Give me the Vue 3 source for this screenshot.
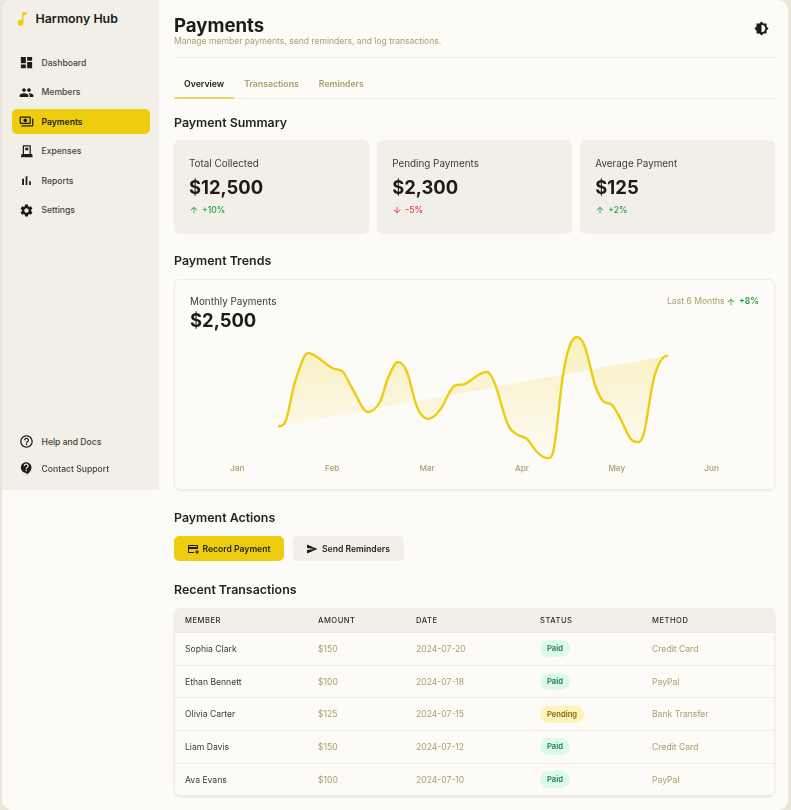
<script setup>
const P = {
  dashboard: 'M3 13h8V3H3v10zm0 8h8v-6H3v6zm10 0h8V11h-8v10zm0-18v6h8V3h-8z',
  members: 'M16 11c1.66 0 2.99-1.34 2.99-3S17.66 5 16 5c-1.66 0-3 1.34-3 3s1.34 3 3 3zm-8 0c1.66 0 2.99-1.34 2.99-3S9.66 5 8 5C6.34 5 5 6.34 5 8s1.34 3 3 3zm0 2c-2.33 0-7 1.17-7 3.5V19h14v-2.5c0-2.33-4.67-3.5-7-3.5zm8 0c-.29 0-.62.02-.97.05 1.16.84 1.97 1.97 1.97 3.45V19h6v-2.5c0-2.33-4.67-3.5-7-3.5z',
  payments: 'M19 14V6c0-1.1-.9-2-2-2H3c-1.1 0-2 .9-2 2v8c0 1.1.9 2 2 2h14c1.1 0 2-.9 2-2zM3 6h14v8H3V6zm7 7c-1.66 0-3-1.34-3-3s1.34-3 3-3 3 1.34 3 3-1.34 3-3 3zm13-6v11c0 1.1-.9 2-2 2H4v-2h17V7h2z',
  expenses: 'M7 2h11a1 1 0 0 1 1 1v13h2l1 5H3l1-5h2V3a1 1 0 0 1 1-1zm1 2v12h9V4H8zm2 2h5v4h-5V6z',
  reports: 'M5 9.2h3V19H5zM10.6 5h2.8v14h-2.8zm5.6 8H19v6h-2.8z',
  settings: 'M19.14 12.94c.04-.3.06-.61.06-.94 0-.32-.02-.64-.07-.94l2.03-1.58c.18-.14.23-.41.12-.61l-1.92-3.32c-.12-.22-.37-.29-.59-.22l-2.39.96c-.5-.38-1.03-.7-1.62-.94l-.36-2.54c-.04-.24-.24-.41-.48-.41h-3.84c-.24 0-.43.17-.47.41l-.36 2.54c-.59.24-1.13.57-1.62.94l-2.39-.96c-.22-.08-.47 0-.59.22L2.74 8.87c-.12.21-.08.47.12.61l2.03 1.58c-.05.3-.09.63-.09.94s.02.64.07.94l-2.03 1.58c-.18.14-.23.41-.12.61l1.92 3.32c.12.22.37.29.59.22l2.39-.96c.5.38 1.03.7 1.62.94l.36 2.54c.05.24.24.41.48.41h3.84c.24 0 .44-.17.47-.41l.36-2.54c.59-.24 1.13-.56 1.62-.94l2.39.96c.22.08.47 0 .59-.22l1.92-3.32c.12-.22.07-.47-.12-.61l-2.01-1.58zM12 15.6c-1.98 0-3.6-1.62-3.6-3.6s1.62-3.6 3.6-3.6 3.6 1.62 3.6 3.6-1.62 3.6-3.6 3.6z',
  help: 'M11 18h2v-2h-2v2zm1-16C6.48 2 2 6.48 2 12s4.48 10 10 10 10-4.48 10-10S17.52 2 12 2zm0 18c-4.41 0-8-3.59-8-8s3.59-8 8-8 8 3.59 8 8-3.59 8-8 8zm0-14c-2.21 0-4 1.79-4 4h2c0-1.1.9-2 2-2s2 .9 2 2c0 2-3 1.75-3 5h2c0-2.25 3-2.5 3-5 0-2.21-1.79-4-4-4z',
  support: 'M11.5 2C6.81 2 3 5.81 3 10.5S6.81 19 11.5 19h.5v3c4.86-2.34 8-7 8-11.5C20 5.81 16.19 2 11.5 2zm1 14.5h-2v-2h2v2zm0-3.5h-2c0-3.25 3-3 3-5 0-1.1-.9-2-2-2s-2 .9-2 2h-2c0-2.21 1.79-4 4-4s4 1.79 4 4c0 2.5-3 2.75-3 5z',
  theme: 'M20 15.31L23.31 12 20 8.69V4h-4.69L12 .69 8.69 4H4v4.69L.69 12 4 15.31V20h4.69L12 23.31 15.31 20H20v-4.69zM12 18V6c3.31 0 6 2.69 6 6s-2.69 6-6 6z',
  note: 'M12 3v10.55c-.59-.34-1.27-.55-2-.55-2.21 0-4 1.79-4 4s1.79 4 4 4 4-1.79 4-4V7h4V3h-6z',
  up: 'M4 12l1.41 1.41L11 7.83V20h2V7.83l5.58 5.59L20 12l-8-8-8 8z',
  down: 'M20 12l-1.41-1.41L13 16.17V4h-2v12.17l-5.58-5.59L4 12l8 8 8-8z',
  send: 'M2.01 21L23 12 2.01 3 2 10l15 2-15 2z',
  card: 'M20 4H4c-1.11 0-1.99.89-1.99 2L2 18c0 1.11.89 2 2 2h10v-2H4v-6h18V6c0-1.11-.89-2-2-2zm0 4H4V6h16v2zm4 9v2h-3v3h-2v-3h-3v-2h3v-3h2v3h3z'
}
const nav = [
  ['Dashboard', 'dashboard'], ['Members', 'members'], ['Payments', 'payments', true],
  ['Expenses', 'expenses'], ['Reports', 'reports'], ['Settings', 'settings']
]
const foot = [['Help and Docs', 'help'], ['Contact Support', 'support']]
const cards = [
  { label: 'Total Collected', value: '$12,500', delta: '+10%', dir: 'up' },
  { label: 'Pending Payments', value: '$2,300', delta: '-5%', dir: 'down' },
  { label: 'Average Payment', value: '$125', delta: '+2%', dir: 'up' }
]
const months = ['Jan', 'Feb', 'Mar', 'Apr', 'May', 'Jun']
const rows = [
  ['Sophia Clark', '$150', '2024-07-20', 'Paid', 'Credit Card'],
  ['Ethan Bennett', '$100', '2024-07-18', 'Paid', 'PayPal'],
  ['Olivia Carter', '$125', '2024-07-15', 'Pending', 'Bank Transfer'],
  ['Liam Davis', '$150', '2024-07-12', 'Paid', 'Credit Card'],
  ['Ava Evans', '$100', '2024-07-10', 'Paid', 'PayPal']
]
const pts = [
  [279,426],[286,420],[295,382],[308,353],[317,357],[332,368],[343,372],[352,388],[368,412],
  [380,402],[388,378],[398,362],[407,372],[417,407],[428,419],[440,410],[453,387],[465,384],[480,374],[487,372],
  [495,384],[508,425],[518,435],[527,439],[537,452],[547,458],[554,448],[563,375],[570,345],[577,337],
  [585,347],[595,385],[603,401],[612,405],[620,418],[630,438],[637,442],[644,433],[653,382],[660,362],[667,356]
].map(([x, y]) => [x - 190, y - 332])
function smooth(p) {
  const n = p.length
  const m = p.map((q, i) => {
    if (i === 0 || i === n - 1) return 0
    const a = q[1] - p[i - 1][1], b = p[i + 1][1] - q[1]
    return a * b <= 0 ? 0 : (p[i + 1][1] - p[i - 1][1]) / (p[i + 1][0] - p[i - 1][0])
  })
  let d = `M${p[0][0]} ${p[0][1]}`
  for (let i = 0; i < n - 1; i++) {
    const t = (p[i + 1][0] - p[i][0]) / 3
    d += ` C${(p[i][0] + t).toFixed(1)} ${(p[i][1] + m[i] * t).toFixed(1)} ${(p[i + 1][0] - t).toFixed(1)} ${(p[i + 1][1] - m[i + 1] * t).toFixed(1)} ${p[i + 1][0]} ${p[i + 1][1]}`
  }
  return d
}
const curve = smooth(pts)
</script>

<template>
  <div class="frame">
    <aside class="sidebar">
      <div>
        <div class="brand">
          <svg class="brand-icon" viewBox="0 0 24 24"><path :d="P.note" /></svg>
          <span>Harmony Hub</span>
        </div>
        <nav class="nav">
          <a v-for="n in nav" :key="n[0]" class="nav-item" :class="{ active: n[2] }">
            <svg class="nav-icon" viewBox="0 0 24 24"><path :d="P[n[1]]" /></svg>
            <span>{{ n[0] }}</span>
          </a>
        </nav>
      </div>
      <div class="nav foot">
        <a v-for="n in foot" :key="n[0]" class="nav-item">
          <svg class="nav-icon" viewBox="0 0 24 24"><path :d="P[n[1]]" /></svg>
          <span>{{ n[0] }}</span>
        </a>
      </div>
    </aside>

    <main class="main">
      <header class="header">
        <div>
          <h1>Payments</h1>
          <p>Manage member payments, send reminders, and log transactions.</p>
        </div>
        <svg class="theme" viewBox="0 0 24 24"><path :d="P.theme" /></svg>
      </header>

      <div class="tabs">
        <span class="tab on">Overview</span>
        <span class="tab">Transactions</span>
        <span class="tab">Reminders</span>
      </div>

      <h2 class="h first">Payment Summary</h2>
      <div class="cards">
        <div v-for="c in cards" :key="c.label" class="card">
          <div class="card-label">{{ c.label }}</div>
          <div class="card-value">{{ c.value }}</div>
          <div class="delta" :class="c.dir">
            <svg viewBox="0 0 24 24"><path :d="P[c.dir]" /></svg>
            <span>{{ c.delta }}</span>
          </div>
        </div>
      </div>

      <h2 class="h">Payment Trends</h2>
      <div class="chart-card">
        <div class="chart-head">
          <div>
            <div class="card-label">Monthly Payments</div>
            <div class="card-value tight">$2,500</div>
          </div>
          <div class="range">
            <span>Last 6 Months</span>
            <span class="delta up">
              <svg viewBox="0 0 24 24"><path :d="P.up" /></svg>
              <span>+8%</span>
            </span>
          </div>
        </div>
        <svg class="chart" viewBox="0 0 569 130">
          <defs>
            <linearGradient id="area" x1="0" y1="0" x2="0" y2="1">
              <stop offset="0" stop-color="#eecf10" stop-opacity=".25" />
              <stop offset="1" stop-color="#eecf10" stop-opacity="0" />
            </linearGradient>
          </defs>
          <path :d="curve + ' Z'" fill="url(#area)" />
          <path :d="curve" fill="none" stroke="#eecd10" stroke-width="2.4" stroke-linecap="round" />
        </svg>
        <div class="months">
          <span v-for="m in months" :key="m">{{ m }}</span>
        </div>
      </div>

      <h2 class="h">Payment Actions</h2>
      <div class="actions">
        <button class="btn primary">
          <svg viewBox="0 0 24 24"><path :d="P.card" /></svg>
          Record Payment
        </button>
        <button class="btn secondary">
          <svg viewBox="0 0 24 24"><path :d="P.send" /></svg>
          Send Reminders
        </button>
      </div>

      <h2 class="h last">Recent Transactions</h2>
      <div class="table-wrap">
        <table>
          <thead>
            <tr>
              <th class="c1">Member</th>
              <th class="c2">Amount</th>
              <th class="c3">Date</th>
              <th class="c4">Status</th>
              <th>Method</th>
            </tr>
          </thead>
          <tbody>
            <tr v-for="r in rows" :key="r[0]">
              <td class="name">{{ r[0] }}</td>
              <td>{{ r[1] }}</td>
              <td>{{ r[2] }}</td>
              <td><span class="pill" :class="r[3].toLowerCase()">{{ r[3] }}</span></td>
              <td>{{ r[4] }}</td>
            </tr>
          </tbody>
        </table>
      </div>
    </main>
  </div>
</template>

<style>
html, body { margin: 0; background: #e9e7d9; }
</style>

<style scoped>
.frame {
  display: flex;
  align-items: flex-start;
  margin: 0 3px 0 2px;
  height: 810px;
  background: #fcfbf7;
  border-radius: 10px;
  overflow: hidden;
  font-family: Inter, "Liberation Sans", sans-serif;
  color: #1c1b14;
  filter: blur(.35px);
}
.sidebar {
  flex: 0 0 157px;
  height: 490px;
  box-sizing: border-box;
  padding: 10px 9px 9px 10px;
  background: #f1efe7;
  display: flex;
  flex-direction: column;
  justify-content: space-between;
}
.brand {
  display: flex;
  align-items: center;
  gap: 4.5px;
  height: 18px;
  margin-bottom: 22px;
  font-size: 12.4px;
  font-weight: 600;
  line-height: 18px;
}
.brand-icon { width: 18px; height: 18px; fill: #eecd10; margin-left: 1px; }
.nav { display: flex; flex-direction: column; gap: 4.6px; }
.foot { gap: 2px; }
.nav-item {
  display: flex;
  align-items: center;
  gap: 7.5px;
  height: 25px;
  padding-left: 7px;
  border-radius: 5px;
  font-size: 8.6px;
  font-weight: 500;
  color: #45443a;
}
.nav-item.active { background: #eecd10; color: #1c1b14; font-weight: 600; }
.nav-icon { width: 15px; height: 15px; fill: #1c1b14; flex: none; }

.main { flex: 1; min-width: 0; padding: 0 13px 0 15px; }
.header {
  display: flex;
  justify-content: space-between;
  align-items: flex-start;
  height: 57px;
  border-bottom: 1px solid #eeece2;
}
h1 { margin: 14px 0 0; font-size: 18.6px; line-height: 22px; font-weight: 700; }
.header p { margin: 0; font-size: 8.55px; line-height: 11px; color: #a8a06c; }
.theme { width: 15px; height: 15px; fill: #1c1b14; margin: 21px 6px 0 0; }

.tabs { display: flex; height: 40px; align-items: flex-end; border-bottom: 1px solid #eeece2; }
.tab {
  padding: 0 10px 7px;
  font-size: 8.72px;
  line-height: 11px;
  font-weight: 600;
  color: #a8a06c;
  margin-bottom: -1px;
  border-bottom: 2px solid transparent;
}
.tab.on { color: #1c1b14; border-bottom-color: #eed65a; }

.h {
  margin: 19.5px 0 10.5px;
  font-size: 12.4px;
  line-height: 16px;
  font-weight: 600;
  color: #26251c;
}
.h.first { margin-top: 16px; margin-bottom: 9px; }
.h.last { margin-top: 20.5px; }

.cards { display: grid; grid-template-columns: repeat(3, 1fr); gap: 8.5px; }
.card {
  height: 93px;
  box-sizing: border-box;
  padding: 16px 15px 15px;
  background: #f1efe7;
  border-radius: 6px;
  box-shadow: 0 1px 2px rgba(60, 55, 20, .06);
}
.card-label { font-size: 9.9px; line-height: 15px; color: #3d3c31; }
.card-value { margin-top: 4px; font-size: 18.4px; line-height: 24px; font-weight: 700; }
.card-value.tight { margin-top: 0; line-height: 23px; }
.delta { display: inline-flex; align-items: center; gap: 3px; font-size: 8.6px; font-weight: 500; }
.card .delta { margin-top: 4px; line-height: 13px; }
.delta svg { width: 10px; height: 10px; fill: currentColor; }
.delta.up { color: #22a045; }
.delta.down { color: #e5383b; }

.chart-card {
  height: 211px;
  box-sizing: border-box;
  padding: 14px 15px 0;
  border: 1px solid #eeece2;
  border-radius: 6px;
  box-shadow: 0 1px 2px rgba(60, 55, 20, .1);
}
.chart-head { display: flex; justify-content: space-between; align-items: flex-start; height: 38px; }
.range { display: flex; align-items: center; gap: 1.5px; font-size: 8.6px; line-height: 15px; color: #a8a06c; }
.range .delta { gap: 3px; font-weight: 600; }
.chart { display: block; width: 569px; height: 130px; overflow: visible; }
.months {
  display: grid;
  grid-template-columns: repeat(6, 1fr);
  text-align: center;
  font-size: 8.2px;
  line-height: 12px;
  font-weight: 500;
  color: #a8a06c;
}

.actions { display: flex; gap: 9px; }
.btn {
  display: flex;
  align-items: center;
  gap: 3.5px;
  height: 25px;
  border: 0;
  border-radius: 5px;
  padding: 0 13px;
  background: #f1efe7;
  font: 600 8.6px Inter, "Liberation Sans", sans-serif;
  color: #26251c;
}
.btn.primary { background: #eecd10; }
.btn.secondary { gap: 4.5px; padding-right: 14.5px; }
.btn svg { width: 12px; height: 12px; fill: #1c1b14; }

.table-wrap {
  border: 1px solid #eeece2;
  border-radius: 6px;
  overflow: hidden;
  box-shadow: 0 1px 2px rgba(60, 55, 20, .12);
}
table { width: 100%; border-collapse: collapse; table-layout: fixed; }
th {
  box-sizing: border-box;
  height: 23.5px;
  padding: 0 10px;
  background: #f1efe7;
  text-align: left;
  font-size: 7.6px;
  font-weight: 500;
  letter-spacing: .5px;
  text-transform: uppercase;
  color: #2e2d23;
}
.c1 { width: 133px; }
.c2 { width: 98px; }
.c3 { width: 124px; }
.c4 { width: 112px; }
td {
  height: 31.7px;
  padding: 0 10px;
  border-top: 1px solid #eeece2;
  font-size: 8.6px;
  color: #a8a06c;
}
td.name { color: #3d3c31; }
.pill {
  display: inline-block;
  padding: 0 7px;
  border-radius: 9px;
  font-size: 7.6px;
  line-height: 17px;
  font-weight: 600;
}
.pill.paid { background: #dcfae8; color: #1d7a45; }
.pill.pending { background: #fdf4b8; color: #8f5a12; }
</style>
